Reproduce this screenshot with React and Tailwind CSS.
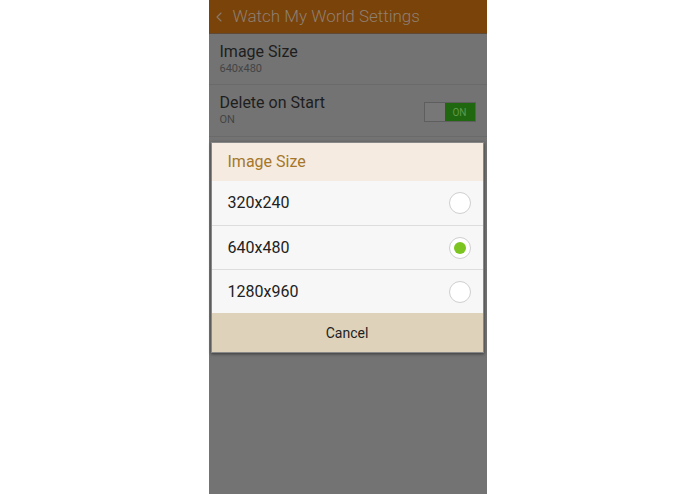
import { ChevronLeft } from 'lucide-react';

const sizes = [
  { label: '320x240', checked: false },
  { label: '640x480', checked: true },
  { label: '1280x960', checked: false },
];

function Radio({ checked }) {
  return (
    <div className="w-[22px] h-[22px] rounded-full bg-white border border-[#cfcfcf] flex items-center justify-center">
      {checked && <div className="w-[12px] h-[12px] rounded-full bg-[#7cc41f]" />}
    </div>
  );
}

export default function App() {
  return (
    <div className="w-full h-[494px] bg-white flex justify-center" style={{ fontFamily: 'Roboto, "Liberation Sans", sans-serif' }}>
      <div className="relative w-[278px] h-full bg-[#737373] flex flex-col">
        {/* action bar, dimmed by the dialog scrim */}
        <div className="h-[34px] bg-[#7a4309] border-b border-[#5e4a36] flex items-center pl-[2px]">
          <ChevronLeft size={16} strokeWidth={1.6} className="text-[#8a7a6c]" />
          <span className="ml-[6px] text-[17px] font-light text-[#8e7f71]">Watch My World Settings</span>
        </div>

        <div className="h-[51px] border-b border-[#6a6a6a] pl-[11px] pt-[8px]">
          <p className="text-[16px] leading-[20px] text-[#1e1e1e]">Image Size</p>
          <p className="text-[11px] leading-[14px] text-[#444]">640x480</p>
        </div>

        <div className="h-[52px] border-b border-[#6a6a6a] pl-[11px] pr-[11px] pt-[8px] flex justify-between">
          <div>
            <p className="text-[16px] leading-[20px] text-[#1e1e1e]">Delete on Start</p>
            <p className="text-[11px] leading-[14px] text-[#444]">ON</p>
          </div>
          <div className="mt-[9px] h-[20px] w-[52px] flex border border-[#5e5e5e]">
            <div className="w-[20px] bg-[#777]" />
            <div className="flex-1 bg-[#1f680f] flex items-center justify-center text-[10px] text-[#5f9a4c]">ON</div>
          </div>
        </div>

        {/* dialog */}
        <div className="absolute left-[2px] top-[142px] w-[273px] shadow-[0_1px_3px_rgba(0,0,0,0.5)] border border-[#888]">
          <div className="h-[38px] bg-[#f5ebe0] flex items-center pl-[16px] text-[16px] text-[#a6772a]">Image Size</div>
          {sizes.map((s, i) => (
            <div key={s.label} className={`h-[44px] bg-[#f7f7f7] flex items-center justify-between pl-[16px] pr-[12px] ${i > 0 ? 'border-t border-[#dddddd]' : ''}`}>
              <span className="text-[16px] text-[#222]">{s.label}</span>
              <Radio checked={s.checked} />
            </div>
          ))}
          <div className="h-[39px] bg-[#dfd2bb] flex items-center justify-center pt-[2px] text-[14px] text-[#222]">Cancel</div>
        </div>
      </div>
    </div>
  );
}
